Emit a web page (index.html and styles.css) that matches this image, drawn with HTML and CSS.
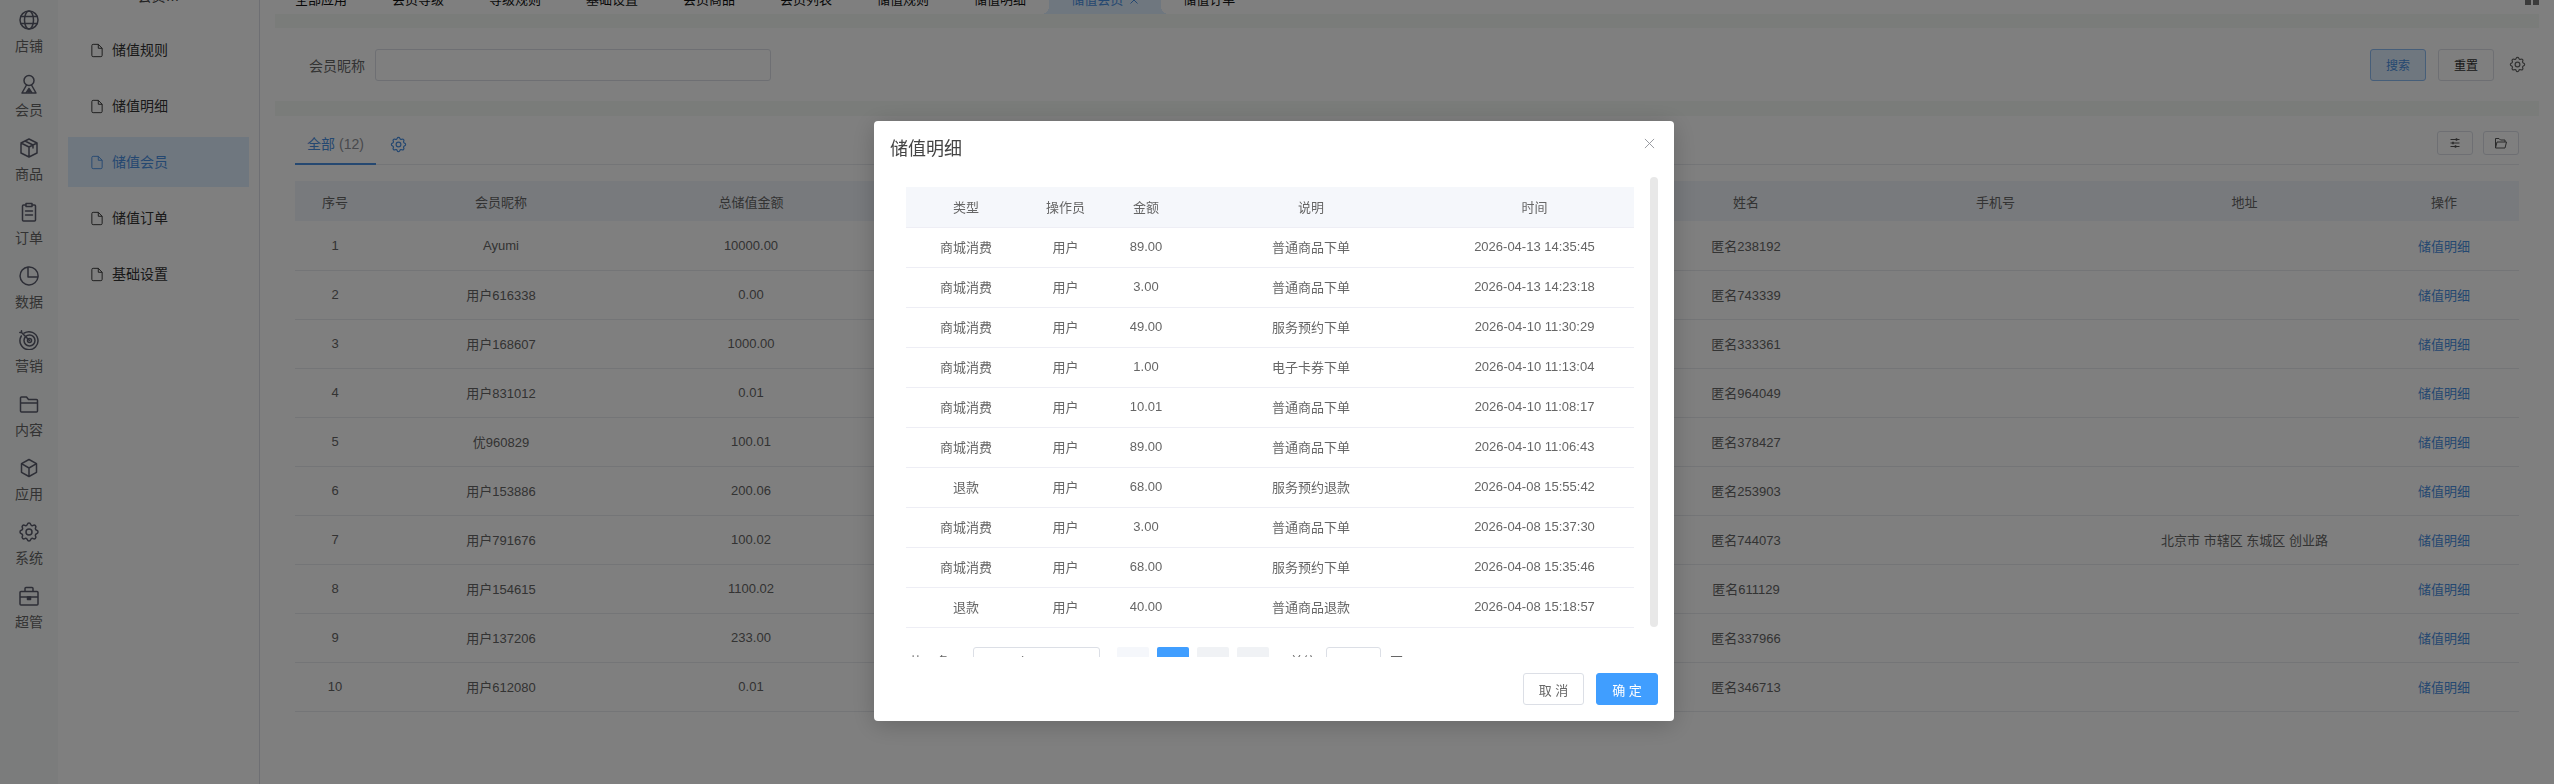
FILE: index.html
```html
<!DOCTYPE html>
<html lang="zh">
<head>
    <meta charset="UTF-8">
    <title>储值会员</title>
    <link rel="stylesheet" href="styles.css">
</head>
<body>
    <svg class="icon-defs" aria-hidden="true">
        <symbol id="i-gear" viewBox="0 0 24 24">
            <path d="M10.325 4.317c.426-1.756 2.924-1.756 3.35 0a1.724 1.724 0 0 0 2.573 1.066c1.543-.94 3.31.826 2.37 2.37a1.724 1.724 0 0 0 1.065 2.572c1.756.426 1.756 2.924 0 3.35a1.724 1.724 0 0 0-1.066 2.573c.94 1.543-.826 3.31-2.37 2.37a1.724 1.724 0 0 0-2.572 1.065c-.426 1.756-2.924 1.756-3.35 0a1.724 1.724 0 0 0-2.573-1.066c-1.543.94-3.31-.826-2.37-2.37a1.724 1.724 0 0 0-1.065-2.572c-1.756-.426-1.756-2.924 0-3.35a1.724 1.724 0 0 0 1.066-2.573c-.94-1.543.826-3.31 2.37-2.37 1 .608 2.296.07 2.572-1.065z"/>
            <circle cx="12" cy="12" r="3"/>
        </symbol>
        <symbol id="i-doc" viewBox="0 0 14 16">
            <path d="M2.5 .8h6l4.5 4.6v8.3a1.5 1.5 0 0 1-1.5 1.5h-9a1.5 1.5 0 0 1-1.5-1.5V2.300a1.500 1.500 0 0 1 1.500-1.500zM8.500 .8v4.600H13"/>
        </symbol>
    </svg>

    <nav class="rail">
        <div class="rail-item">
            <svg class="rail-icon" viewBox="0 0 20 20"><circle cx="10" cy="10" r="9"/><ellipse cx="10" cy="10" rx="4.500" ry="9"/><path d="M1.800 6.500h16.400M1.800 13.500h16.400"/></svg>
            <span>店铺</span>
        </div>
        <div class="rail-item">
            <svg class="rail-icon" viewBox="0 0 20 20"><circle cx="10" cy="6.500" r="5"/><path d="M7.500 11l-4.500 8h14l-4.500-8M10 14.500v4.500M7 19l3-4.500 3 4.500"/></svg>
            <span>会员</span>
        </div>
        <div class="rail-item">
            <svg class="rail-icon" viewBox="0 0 20 20"><path d="M10 1l8 4v10l-8 4-8-4V5zM2 5l8 4 8-4M10 9v10M6 3l8 4v3"/></svg>
            <span>商品</span>
        </div>
        <div class="rail-item">
            <svg class="rail-icon" viewBox="0 0 20 20"><path d="M7 3H4.500A1 1 0 0 0 3.500 4v14a1 1 0 0 0 1 1h11a1 1 0 0 0 1-1V4a1 1 0 0 0-1-1H13M7 1.500h6v3H7zM6.500 9h7M6.500 13h7"/></svg>
            <span>订单</span>
        </div>
        <div class="rail-item">
            <svg class="rail-icon" viewBox="0 0 20 20"><path d="M19 11a9 9 0 1 1-10-10v10zM9 1a9 9 0 0 1 10 10"/></svg>
            <span>数据</span>
        </div>
        <div class="rail-item">
            <svg class="rail-icon" viewBox="0 0 20 20"><path d="M5 3.200A9 9 0 1 1 2.300 6"/><circle cx="10.500" cy="10.500" r="5.500"/><circle cx="10.500" cy="10.500" r="2"/><path d="M10.500 10.500L2.500 2.500M2.500 .8v1.700H.8"/></svg>
            <span>营销</span>
        </div>
        <div class="rail-item">
            <svg class="rail-icon" viewBox="0 0 20 20"><path d="M1.500 4a1 1 0 0 1 1-1h5l2 2.500h8a1 1 0 0 1 1 1V17a1 1 0 0 1-1 1h-15a1 1 0 0 1-1-1zM1.500 9h17"/></svg>
            <span>内容</span>
        </div>
        <div class="rail-item">
            <svg class="rail-icon" viewBox="0 0 20 20"><path d="M10 1.500l7.500 4.200v8.600L10 18.500l-7.500-4.200V5.700zM2.500 5.700L10 10l7.500-4.300M10 10v8.500"/></svg>
            <span>应用</span>
        </div>
        <div class="rail-item">
            <svg class="rail-icon rail-gear"><use href="#i-gear"/></svg>
            <span>系统</span>
        </div>
        <div class="rail-item">
            <svg class="rail-icon" viewBox="0 0 20 20"><path d="M1 6.500a1 1 0 0 1 1-1h16a1 1 0 0 1 1 1V18a1 1 0 0 1-1 1H2a1 1 0 0 1-1-1zM6 5.500V2.500a1 1 0 0 1 1-1h6a1 1 0 0 1 1 1v3M1 11h18"/><path class="solid" d="M8.500 11h3v2.500h-3z"/></svg>
            <span>超管</span>
        </div>
    </nav>

    <aside class="submenu">
        <div class="submenu-title">会员…</div>
        <ul class="submenu-list">
            <li class="submenu-item"><svg class="doc-icon"><use href="#i-doc"/></svg><span>储值规则</span></li>
            <li class="submenu-item"><svg class="doc-icon"><use href="#i-doc"/></svg><span>储值明细</span></li>
            <li class="submenu-item active"><svg class="doc-icon"><use href="#i-doc"/></svg><span>储值会员</span></li>
            <li class="submenu-item"><svg class="doc-icon"><use href="#i-doc"/></svg><span>储值订单</span></li>
            <li class="submenu-item"><svg class="doc-icon"><use href="#i-doc"/></svg><span>基础设置</span></li>
        </ul>
    </aside>

    <main class="main">
        <div class="page-tabs">
            <span class="page-tab">全部应用</span>
            <span class="page-tab">会员等级</span>
            <span class="page-tab">等级规则</span>
            <span class="page-tab">基础设置</span>
            <span class="page-tab">会员商品</span>
            <span class="page-tab">会员列表</span>
            <span class="page-tab">储值规则</span>
            <span class="page-tab">储值明细</span>
            <span class="page-tab active">储值会员<svg class="tab-close" viewBox="0 0 8 8"><path d="M.5 .5l7 7M7.500 .5l-7 7"/></svg></span>
            <span class="page-tab">储值订单</span>
            <span class="tab-grid"><i></i><i></i></span>
        </div>

        <div class="content">
            <section class="card filter-card">
                <label class="filter-label">会员昵称</label>
                <input class="filter-input" type="text">
                <div class="filter-actions">
                    <button class="btn btn-search">搜索</button>
                    <button class="btn">重置</button>
                    <svg class="filter-gear"><use href="#i-gear"/></svg>
                </div>
            </section>

            <section class="card list-card">
                <div class="list-tabs">
                    <span class="list-tab"><b>全部</b> (12)</span>
                    <svg class="list-gear"><use href="#i-gear"/></svg>
                    <div class="list-tools">
                        <button class="tool-btn">
                            <svg viewBox="0 0 14 14"><path d="M2.500 3.500h9M2.500 7h9M2.500 10.500h9"/><path class="tick" d="M8.500 2.200v2.600M5 5.700v2.600M7.500 9.200v2.600"/></svg>
                        </button>
                        <button class="tool-btn">
                            <svg viewBox="0 0 14 14"><path d="M1.500 12V2.500h3.500l1.500 1.500h4.500v2M1.500 12l1.500-6h9.500l-1.500 6z"/></svg>
                        </button>
                    </div>
                </div>

                <table class="data-table">
                    <colgroup>
                        <col class="c-index"><col class="c-name"><col class="c-total"><col class="c-hidden"><col class="c-hidden"><col class="c-hidden"><col class="c-real"><col class="c-info"><col class="c-info"><col class="c-action">
                    </colgroup>
                    <thead>
                        <tr><th>序号</th><th>会员昵称</th><th>总储值金额</th><th></th><th></th><th></th><th>姓名</th><th>手机号</th><th>地址</th><th>操作</th></tr>
                    </thead>
                    <tbody>
                        <tr><td>1</td><td>Ayumi</td><td>10000.00</td><td></td><td></td><td></td><td>匿名238192</td><td></td><td></td><td><a class="link">储值明细</a></td></tr>
                        <tr><td>2</td><td>用户616338</td><td>0.00</td><td></td><td></td><td></td><td>匿名743339</td><td></td><td></td><td><a class="link">储值明细</a></td></tr>
                        <tr><td>3</td><td>用户168607</td><td>1000.00</td><td></td><td></td><td></td><td>匿名333361</td><td></td><td></td><td><a class="link">储值明细</a></td></tr>
                        <tr><td>4</td><td>用户831012</td><td>0.01</td><td></td><td></td><td></td><td>匿名964049</td><td></td><td></td><td><a class="link">储值明细</a></td></tr>
                        <tr><td>5</td><td>优960829</td><td>100.01</td><td></td><td></td><td></td><td>匿名378427</td><td></td><td></td><td><a class="link">储值明细</a></td></tr>
                        <tr><td>6</td><td>用户153886</td><td>200.06</td><td></td><td></td><td></td><td>匿名253903</td><td></td><td></td><td><a class="link">储值明细</a></td></tr>
                        <tr><td>7</td><td>用户791676</td><td>100.02</td><td></td><td></td><td></td><td>匿名744073</td><td></td><td>北京市 市辖区 东城区 创业路</td><td><a class="link">储值明细</a></td></tr>
                        <tr><td>8</td><td>用户154615</td><td>1100.02</td><td></td><td></td><td></td><td>匿名611129</td><td></td><td></td><td><a class="link">储值明细</a></td></tr>
                        <tr><td>9</td><td>用户137206</td><td>233.00</td><td></td><td></td><td></td><td>匿名337966</td><td></td><td></td><td><a class="link">储值明细</a></td></tr>
                        <tr><td>10</td><td>用户612080</td><td>0.01</td><td></td><td></td><td></td><td>匿名346713</td><td></td><td></td><td><a class="link">储值明细</a></td></tr>
                    </tbody>
                </table>
            </section>
        </div>
    </main>

    <div class="mask"></div>

    <div class="modal">
        <div class="modal-head">
            <span class="modal-title">储值明细</span>
            <svg class="modal-close" viewBox="0 0 12 12"><path d="M1 1l10 10M11 1L1 11"/></svg>
        </div>
        <div class="modal-body">
            <div class="modal-scroll">
                <table class="detail-table">
                    <colgroup>
                        <col class="d-type"><col class="d-user"><col class="d-amount"><col class="d-desc"><col class="d-time">
                    </colgroup>
                    <thead>
                        <tr><th>类型</th><th>操作员</th><th>金额</th><th>说明</th><th>时间</th></tr>
                    </thead>
                    <tbody>
                        <tr><td>商城消费</td><td>用户</td><td>89.00</td><td>普通商品下单</td><td>2026-04-13 14:35:45</td></tr>
                        <tr><td>商城消费</td><td>用户</td><td>3.00</td><td>普通商品下单</td><td>2026-04-13 14:23:18</td></tr>
                        <tr><td>商城消费</td><td>用户</td><td>49.00</td><td>服务预约下单</td><td>2026-04-10 11:30:29</td></tr>
                        <tr><td>商城消费</td><td>用户</td><td>1.00</td><td>电子卡券下单</td><td>2026-04-10 11:13:04</td></tr>
                        <tr><td>商城消费</td><td>用户</td><td>10.01</td><td>普通商品下单</td><td>2026-04-10 11:08:17</td></tr>
                        <tr><td>商城消费</td><td>用户</td><td>89.00</td><td>普通商品下单</td><td>2026-04-10 11:06:43</td></tr>
                        <tr><td>退款</td><td>用户</td><td>68.00</td><td>服务预约退款</td><td>2026-04-08 15:55:42</td></tr>
                        <tr><td>商城消费</td><td>用户</td><td>3.00</td><td>普通商品下单</td><td>2026-04-08 15:37:30</td></tr>
                        <tr><td>商城消费</td><td>用户</td><td>68.00</td><td>服务预约下单</td><td>2026-04-08 15:35:46</td></tr>
                        <tr><td>退款</td><td>用户</td><td>40.00</td><td>普通商品退款</td><td>2026-04-08 15:18:57</td></tr>
                    </tbody>
                </table>
                <div class="pager">
                    <span class="pager-total">共 2 条</span>
                    <span class="pager-select">10条/页</span>
                    <button class="pager-btn first">‹</button>
                    <button class="pager-btn current">1</button>
                    <button class="pager-btn">2</button>
                    <button class="pager-btn">›</button>
                    <span class="pager-jump">前往</span>
                    <span class="pager-input">1</span>
                    <span class="pager-unit">页</span>
                </div>
            </div>
            <div class="modal-scrollbar"></div>
        </div>
        <div class="modal-foot">
            <button class="foot-btn">取 消</button>
            <button class="foot-btn primary">确 定</button>
        </div>
    </div>
</body>
</html>
```

FILE: styles.css
```css
/* 页面底层 */
* {
    box-sizing: border-box;
}

html,
body {
    height: 100%;
}

body {
    margin: 0;
    display: flex;
    height: 784px;
    overflow: hidden;
    background: #fff;
    color: #666;
    font-family: "Liberation Sans", "Noto Sans CJK SC", sans-serif;
    font-size: 13px;
}

.icon-defs {
    display: none;
}

/* 左侧图标栏 */
.rail {
    flex: 0 0 58px;
    display: flex;
    flex-direction: column;
    align-items: center;
    gap: 18px;
    padding-top: 10px;
    background: #f7f9f9;
}

.rail-item {
    display: flex;
    flex-direction: column;
    align-items: center;
    gap: 6px;
    color: #666;
    font-size: 14px;
    line-height: 20px;
}

.rail-icon {
    width: 20px;
    height: 20px;
    fill: none;
    stroke: #5a5c6c;
    stroke-width: 1.500;
    stroke-linejoin: round;
    stroke-linecap: round;
}

.rail-gear {
    width: 24px;
    height: 24px;
    margin: -2px 0;
}

.rail-icon .solid {
    fill: #5a5c6c;
}

/* 二级菜单 */
.submenu {
    flex: 0 0 202px;
    padding: 0 10px;
    border-right: 1px solid #dcdfe6;
}

.submenu-title {
    margin-top: -14px;
    height: 20px;
    line-height: 20px;
    font-size: 14px;
    text-align: center;
    color: #444;
}

.submenu-list {
    list-style: none;
    margin: 19px 0 0;
    padding: 0;
    display: flex;
    flex-direction: column;
    gap: 6px;
}

.submenu-item {
    display: flex;
    align-items: center;
    gap: 9px;
    height: 50px;
    padding-left: 23px;
    color: #333;
    font-size: 14px;
}

.submenu-item span {
    padding-bottom: 2px;
}

.submenu-item.active {
    background: #deeeff;
    color: #4a90e2;
}

.doc-icon {
    width: 12px;
    height: 15px;
    fill: none;
    stroke: currentColor;
    stroke-width: 1.100;
}

/* 右侧主体 */
.main {
    flex: 1;
    min-width: 0;
    display: flex;
    flex-direction: column;
}

.page-tabs {
    position: relative;
    display: flex;
    flex: 0 0 28px;
    margin-top: -14px;
    height: 28px;
    padding-left: 12.500px;
    line-height: 28px;
    color: #111;
}

.page-tab {
    position: relative;
    height: 28px;
    padding: 0 22.500px;
    white-space: nowrap;
}

.page-tab.active {
    background: #deeeff;
    border-radius: 8px 8px 0 0;
    color: #4a90e2;
}

.page-tab.active::before,
.page-tab.active::after {
    content: "";
    position: absolute;
    bottom: 0;
    width: 8px;
    height: 8px;
}

.page-tab.active::before {
    left: -8px;
    background: radial-gradient(circle at 0 0, transparent 8px, #deeeff 8px);
}

.page-tab.active::after {
    right: -8px;
    background: radial-gradient(circle at 100% 0, transparent 8px, #deeeff 8px);
}

.tab-close {
    width: 8px;
    height: 8px;
    margin-left: 7px;
    fill: none;
    stroke: currentColor;
    stroke-width: 1;
}

.tab-grid {
    position: absolute;
    top: 14px;
    right: 15px;
    display: flex;
    gap: 2px;
}

.tab-grid i {
    display: block;
    width: 6px;
    height: 5px;
    background: #777;
}

.content {
    flex: 1;
    margin: 0 15px;
    padding-top: 14px;
    display: flex;
    flex-direction: column;
    gap: 15px;
    background: #f4f8f5;
}

.card {
    background: #fff;
}

.filter-card {
    flex: 0 0 73px;
    display: flex;
    align-items: center;
    padding: 0 12px 0 34px;
}

.filter-label {
    width: 66px;
    color: #666;
    font-size: 14px;
}

.filter-input {
    width: 396px;
    height: 32px;
    border: 1px solid #dcdfe6;
    border-radius: 3px;
    background: #fff;
}

.filter-actions {
    margin-left: auto;
    display: flex;
    align-items: center;
    gap: 12px;
}

.btn {
    width: 56px;
    height: 32px;
    border: 1px solid #dcdfe6;
    border-radius: 3px;
    background: #fff;
    color: #333;
    font: inherit;
    font-size: 12px;
}

.btn-search {
    background: #deeeff;
    border-color: #8dbcf2;
    color: #4a90e2;
}

.filter-gear {
    width: 19px;
    height: 19px;
    margin-left: 2px;
    fill: none;
    stroke: #666;
    stroke-width: 1.500;
}

.list-card {
    flex: 1;
    padding: 0 20px;
}

.list-tabs {
    display: flex;
    align-items: center;
    height: 49px;
    border-bottom: 1px solid #e8eaee;
}

.list-tab {
    align-self: stretch;
    width: 81px;
    padding-top: 18px;
    line-height: 20px;
    text-align: center;
    font-size: 14px;
    color: #909399;
    border-bottom: 2px solid #4a90e2;
    margin-bottom: -1px;
}

.list-tab b {
    font-weight: normal;
    color: #4a90e2;
}

.list-gear {
    width: 19px;
    height: 19px;
    margin: 8px 0 0 13px;
    fill: none;
    stroke: #4a90e2;
    stroke-width: 1.500;
}

.list-tools {
    margin: 5px 0 0 auto;
    display: flex;
    gap: 10px;
}

.tool-btn {
    width: 36px;
    height: 24px;
    padding: 0;
    border: 1px solid #dcdfe6;
    border-radius: 3px;
    background: #fff;
}

.tool-btn svg {
    display: block;
    width: 14px;
    height: 14px;
    margin: 0 auto;
    fill: none;
    stroke: #555;
    stroke-width: 1;
}

.tool-btn .tick {
    stroke-width: 1.600;
}

.data-table,
.detail-table {
    width: 100%;
    table-layout: fixed;
    border-collapse: collapse;
    text-align: center;
}

.data-table {
    margin-top: 16px;
}

.c-index { width: 80px; }
.c-name { width: 252px; }
.c-total { width: 248px; }
.c-hidden { width: 248.667px; }
.c-real { width: 250px; }
.c-info { width: 249px; }
.c-action { width: 150px; }

.data-table th {
    height: 40px;
    padding: 0;
    background: #f0f4fa;
    font-weight: normal;
    color: #666;
}

.data-table td {
    height: 49px;
    padding: 0;
    border-bottom: 1px solid #e8eaee;
    color: #666;
}

.link {
    color: #4a90e2;
}

/* 弹窗 */
.mask {
    position: fixed;
    inset: 0;
    background: rgba(0, 0, 0, 0.5);
}

.modal {
    position: fixed;
    left: 874px;
    top: 121px;
    width: 800px;
    height: 600px;
    display: flex;
    flex-direction: column;
    background: #fff;
    border-radius: 4px;
    box-shadow: 0 4px 24px rgba(0, 0, 0, 0.2);
}

.modal-head {
    flex: 0 0 56px;
    display: flex;
    justify-content: space-between;
    padding: 17px 19px 0 16px;
}

.modal-title {
    font-size: 18px;
    line-height: 22px;
    color: #444;
}

.modal-close {
    width: 11px;
    height: 11px;
    fill: none;
    stroke: #909399;
    stroke-width: 1;
}

.modal-body {
    flex: 0 0 480px;
    display: flex;
    gap: 16px;
    padding: 0 16px 0 32px;
}

.modal-scroll {
    flex: 1;
    height: 480px;
    padding-top: 10px;
    overflow: hidden;
}

.modal-scrollbar {
    flex: 0 0 8px;
    height: 450px;
    border-radius: 4px;
    background: #e8e8e8;
}

.d-type { width: 120px; }
.d-user { width: 79px; }
.d-amount { width: 82px; }
.d-desc { width: 248px; }
.d-time { width: 199px; }

.detail-table th {
    height: 40px;
    padding: 0;
    background: #f5f7fb;
    border-bottom: 1px solid #eeeef5;
    font-weight: normal;
    color: #666;
}

.detail-table td {
    height: 40px;
    padding: 0 0 2px;
    border-bottom: 1px solid #eeeef5;
    color: #666;
}

.pager {
    display: flex;
    margin-top: 19px;
    padding-left: 3px;
    height: 32px;
    line-height: 30px;
    color: #666;
}

.pager-total {
    width: 64px;
}

.pager-select {
    width: 127px;
    margin-right: 17px;
    border: 1px solid #dcdfe6;
    border-radius: 3px;
    padding-left: 29px;
}

.pager-btn {
    width: 32px;
    height: 32px;
    margin-right: 8px;
    padding: 0;
    border: 0;
    border-radius: 2px;
    background: #f0f2f5;
    color: #666;
    font: inherit;
}

.pager-btn.first {
    background: #f5f7fb;
}

.pager-btn.current {
    background: #409eff;
    color: #fff;
}

.pager-jump {
    width: 26px;
    margin: 0 10px 0 13px;
}

.pager-input {
    width: 55px;
    border: 1px solid #dcdfe6;
    border-radius: 3px;
    text-align: center;
}

.pager-unit {
    margin-left: 9px;
}

.modal-foot {
    flex: 1;
    display: flex;
    justify-content: flex-end;
    gap: 12px;
    padding: 16px 16px 0 0;
}

.foot-btn {
    width: 61px;
    height: 32px;
    border: 1px solid #dcdfe6;
    border-radius: 3px;
    background: #fff;
    color: #666;
    font: inherit;
}

.foot-btn.primary {
    width: 62px;
    border-color: #409eff;
    background: #409eff;
    color: #fff;
}
```
